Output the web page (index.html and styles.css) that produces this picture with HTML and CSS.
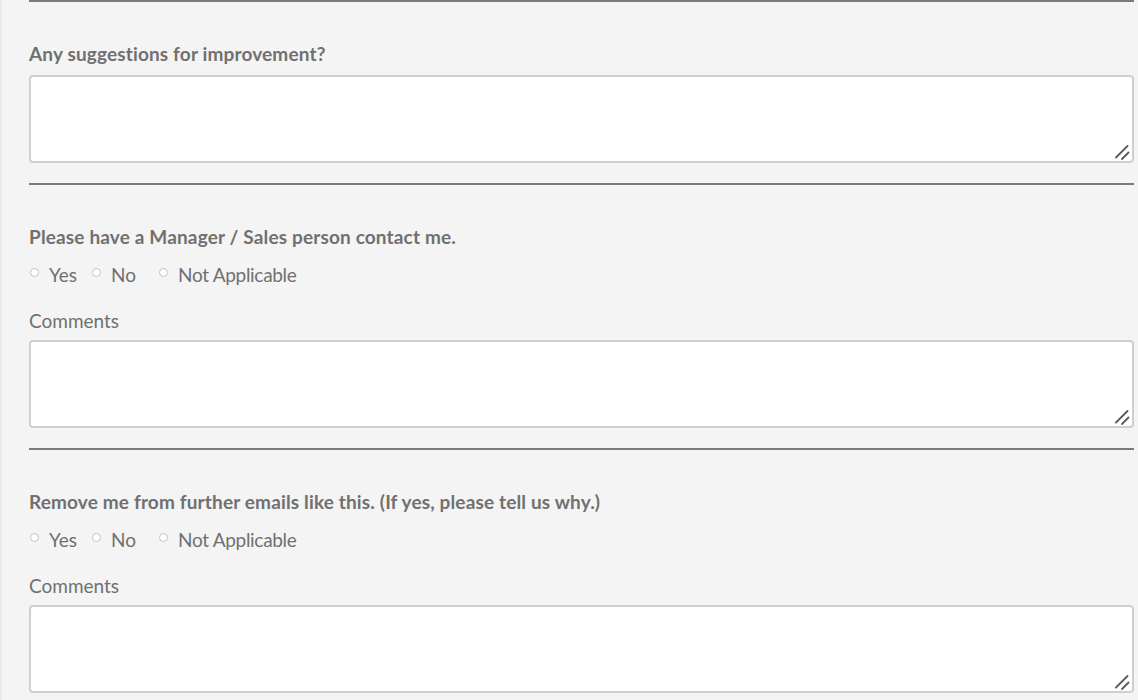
FILE: index.html
```html
<!DOCTYPE html>
<html>
<head>
<meta charset="utf-8">
<link rel="stylesheet" href="styles.css">
</head>
<body>
<div class="page">
  <hr class="rule">
  <section class="block">
    <label class="question">Any suggestions for improvement?</label>
    <div class="field">
      <textarea class="box"></textarea>
      <svg class="grip" width="16" height="16" viewBox="0 0 16 16"><path d="M1 12.5 L12.5 1 M7 14 L13.5 7.5" stroke="#5a5a5a" stroke-width="1.8" fill="none" stroke-linecap="round"/></svg>
    </div>
  </section>
  <hr class="rule">
  <section class="block">
    <div class="question">Please have a Manager / Sales person contact me.</div>
    <div class="options">
      <label class="opt"><input type="radio" name="q1"><span>Yes</span></label>
      <label class="opt opt-mid"><input type="radio" name="q1"><span>No</span></label>
      <label class="opt"><input type="radio" name="q1"><span class="na">Not Applicable</span></label>
    </div>
    <label class="comments">Comments</label>
    <div class="field">
      <textarea class="box"></textarea>
      <svg class="grip" width="16" height="16" viewBox="0 0 16 16"><path d="M1 12.5 L12.5 1 M7 14 L13.5 7.5" stroke="#5a5a5a" stroke-width="1.8" fill="none" stroke-linecap="round"/></svg>
    </div>
  </section>
  <hr class="rule">
  <section class="block">
    <div class="question">Remove me from further emails like this. (If yes, please tell us why.)</div>
    <div class="options">
      <label class="opt"><input type="radio" name="q2"><span>Yes</span></label>
      <label class="opt opt-mid"><input type="radio" name="q2"><span>No</span></label>
      <label class="opt"><input type="radio" name="q2"><span class="na">Not Applicable</span></label>
    </div>
    <label class="comments">Comments</label>
    <div class="field">
      <textarea class="box"></textarea>
      <svg class="grip" width="16" height="16" viewBox="0 0 16 16"><path d="M1 12.5 L12.5 1 M7 14 L13.5 7.5" stroke="#5a5a5a" stroke-width="1.8" fill="none" stroke-linecap="round"/></svg>
    </div>
  </section>
</div>
</body>
</html>
```
FILE: styles.css
```css
html, body {
  margin: 0;
  padding: 0;
  background: #f4f4f4;
  height: 100%;
  overflow: hidden;
}
.page {
  border-left: 2px solid #e8e8e8;
  padding: 0 4px 0 27px;
  min-height: 100%;
  box-sizing: border-box;
  font-family: "Lato", "Open Sans", sans-serif;
  color: #707070;
}
.rule {
  margin: 0;
  border: 0;
  height: 2px;
  background: #7b7b7b;
}
.block {
  display: flex;
  flex-direction: column;
  padding: 40px 0 20px;
}
.question {
  display: block;
  font-size: 19px;
  font-weight: 700;
  line-height: 24px;
  letter-spacing: 0.15px;
  margin-bottom: 9px;
}
.block .options + .comments {
  margin-top: 22px;
}
.options {
  display: flex;
  align-items: center;
  height: 24px;
  margin-top: 5px;
  font-size: 19px;
  line-height: 24px;
}
.opt {
  display: flex;
  align-items: center;
  margin-right: 14px;
}
.opt-mid {
  margin-right: 22px;
}
.na {
  letter-spacing: -0.3px;
}
.opt input {
  appearance: none;
  -webkit-appearance: none;
  box-sizing: border-box;
  width: 9px;
  height: 9px;
  margin: 0 10px 0 1px;
  border: 1px solid #c2c2c2;
  border-radius: 50%;
  background: #fff;
  position: relative;
  top: -3px;
}
.comments {
  display: block;
  font-size: 19px;
  line-height: 24px;
  margin-bottom: 7px;
}
.field {
  position: relative;
}
.box {
  display: block;
  box-sizing: border-box;
  width: 100%;
  height: 88px;
  border: 2px solid #cfcfcf;
  border-radius: 4px;
  background: #fff;
  resize: none;
  margin: 0;
}
.grip {
  position: absolute;
  right: 3px;
  bottom: 2px;
}
```
